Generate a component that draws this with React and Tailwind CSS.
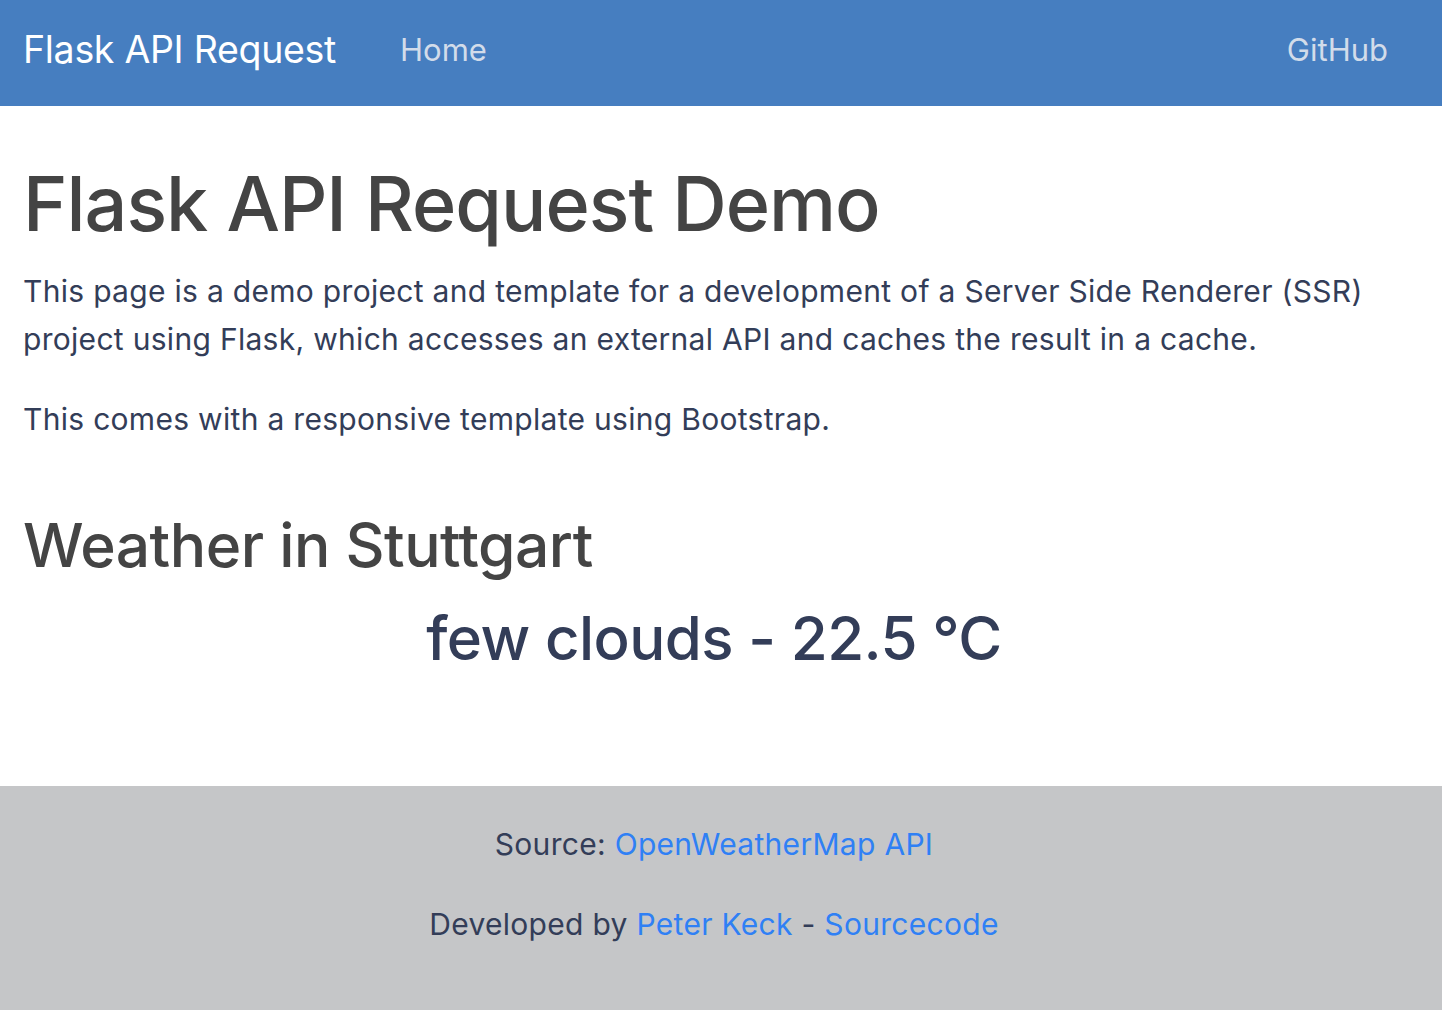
import React from "react";

const App = () => {
  return (
    <div
      className="min-h-screen bg-white text-[#333d58]"
      style={{ fontFamily: "Inter, 'Noto Sans', sans-serif" }}
    >
      <nav className="h-[106px] bg-[#467ec0] flex items-center px-[23px] pb-[5px]">
        <a className="text-white text-[37.5px] tracking-[-0.3px]">Flask API Request</a>
        <a className="ml-[64px] text-[#d2dcea] text-[31px]">Home</a>
        <a className="ml-auto mr-[31px] text-[#d2dcea] text-[31px]">GitHub</a>
      </nav>

      <main className="pl-[23px] pr-[37px] pt-[53px] h-[680px]">
        <h1 className="text-[75.5px] leading-[1.2] font-medium text-[#444444] tracking-[-1px]">
          Flask API Request Demo
        </h1>
        <p className="mt-[17px] text-[30px] tracking-[0.3px] leading-[48px]">
          This page is a demo project and template for a development of a Server Side Renderer (SSR)
          project using Flask, which accesses an external API and caches the result in a cache.
        </p>
        <p className="mt-[32px] text-[30px] tracking-[0.3px] leading-[48px]">
          This comes with a responsive template using Bootstrap.
        </p>
        <h2 className="mt-[66px] text-[60.5px] leading-[1.2] font-medium text-[#444444] tracking-[-0.5px]">
          Weather in Stuttgart
        </h2>
        <div className="mt-[21px] text-center text-[60px] leading-[1.2] font-medium tracking-[-0.6px]">
          few clouds - 22.5 °C
        </div>
      </main>

      <footer className="h-[224px] bg-[#c5c6c8] flex flex-col items-center pt-[38px] pr-[14px] text-[30px] tracking-[0.3px] leading-[40px]">
        <p>
          Source: <a className="text-[#2f80f5]">OpenWeatherMap API</a>
        </p>
        <p className="mt-[40px]">
          Developed by <a className="text-[#2f80f5]">Peter Keck</a> -{" "}
          <a className="text-[#2f80f5]">Sourcecode</a>
        </p>
      </footer>
    </div>
  );
};

export default App;
